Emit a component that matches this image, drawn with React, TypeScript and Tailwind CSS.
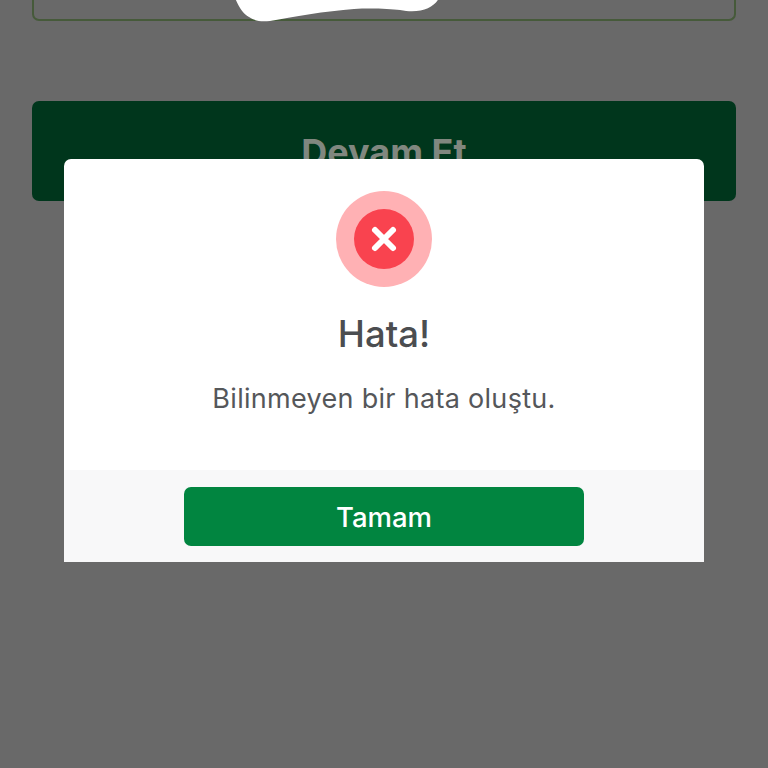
export default function App() {
  return (
    <div className="relative h-[768px] w-[768px] overflow-hidden bg-[#696969] px-8 font-['Inter',sans-serif]">
      <div className="relative h-[21px] rounded-b-[7px] border-x-2 border-b-2 border-[#465a3a]">
        <svg className="absolute left-[196px] top-0" width="212" height="24" viewBox="0 0 212 24" fill="#ffffff">
          <path d="M5 -2 C9 7 13 14 19 17 C25 21 31 22 40 21 C62 17 96 11 124 9 C142 8 160 9 170 10 C190 14 204 8 209 -2 Z" />
        </svg>
      </div>
      <div className="mt-[80px] flex h-[100px] items-center justify-center rounded-[7px] bg-[#00361c] pt-px text-[36px] font-bold text-[#80877f]">
        Devam Et
      </div>
      <div className="absolute left-[64px] top-[159px] flex h-[403px] w-[640px] flex-col rounded-t-[7px] bg-white">
        <div className="flex flex-1 flex-col items-center pt-8">
          <div className="flex size-[96px] items-center justify-center rounded-full bg-[#ffb1b4]">
            <div className="flex size-[60px] items-center justify-center rounded-full bg-[#f9434f]">
              <svg width="28" height="28" viewBox="0 0 28 28" fill="none" stroke="#ffffff" strokeWidth="6" strokeLinecap="round">
                <path d="M5 5 L23 23 M23 5 L5 23" />
              </svg>
            </div>
          </div>
          <h1 className="mt-[25px] text-[36.5px] leading-[44px] font-medium text-[#4b4d50]">Hata!</h1>
          <p className="mt-[25px] text-[27px] leading-[36px] text-[#55575a] tracking-[0.3px]">Bilinmeyen bir hata oluştu.</p>
        </div>
        <div className="flex h-[92px] justify-center bg-[#f8f8f9] pt-[17px]">
          <button className="flex h-[59px] w-[400px] items-center justify-center rounded-[7px] bg-[#018540] pt-[2px] text-[27.5px] font-medium text-white">
            Tamam
          </button>
        </div>
      </div>
    </div>
  );
}
